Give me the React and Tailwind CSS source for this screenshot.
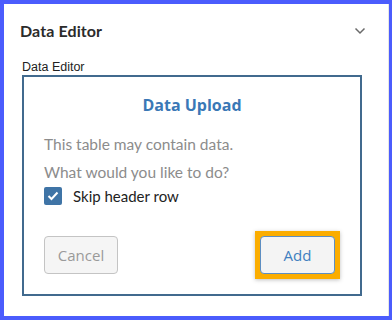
import React, { useState } from "react";

// Data editor panel with the upload dialog
export default function App() {
  const [skipHeader, setSkipHeader] = useState(true);

  return (
    <div className="w-[392px] h-[320px] bg-white border-[#4b5cfd] border-t-[4px] border-l-[4px] border-b-[4px] border-r-[3px] font-['Open_Sans',sans-serif]">
      <div className="h-full border-r border-[#e6e6e6] flex flex-col">
        <div className="flex items-center justify-between pl-4 pr-[22px] pt-[15px] h-[38px]">
          <div className="text-[16px] font-bold text-[#2b2b2b] font-['Lato',sans-serif] tracking-[0.1px]">
            Data Editor
          </div>
          <svg width="12" height="8" viewBox="0 0 12 8" fill="none">
            <path d="M1.5 1.5 L6 6 L10.5 1.5" stroke="#6a6a6a" strokeWidth="1.5" />
          </svg>
        </div>

        <div className="pl-[18px] mt-[17px] text-[12.5px] leading-[16px] text-[#222] font-['Liberation_Sans',sans-serif]">
          Data Editor
        </div>

        <div className="ml-[18px] w-[340px] h-[221px] border-2 border-[#416a8e] flex flex-col px-5">
          <div className="text-center text-[16px] font-bold text-[#3a78b6] mt-[17px] leading-[22px]">
            Data Upload
          </div>
          <div className="font-['Lato',sans-serif]">
            <div className="mt-[18px] text-[15.5px] leading-[20px] text-[#8c8c8c]">
              This table may contain data.
            </div>
            <div className="mt-[8px] text-[15.5px] leading-[20px] text-[#8c8c8c]">
              What would you like to do?
            </div>
            <label className="flex items-center gap-[11px] mt-[4px] cursor-pointer">
              <span
                onClick={() => setSkipHeader(!skipHeader)}
                className="w-[18px] h-[18px] rounded-[2px] bg-[#3f74a6] flex items-center justify-center"
              >
                {skipHeader && (
                  <svg width="12" height="10" viewBox="0 0 12 10" fill="none">
                    <path d="M1.5 5 L4.5 8 L10.5 1.5" stroke="white" strokeWidth="2" />
                  </svg>
                )}
              </span>
              <span className="text-[15px] leading-[20px] text-[#222]">Skip header row</span>
            </label>
          </div>

          <div className="flex items-center justify-between mt-[25px]">
            <button className="w-[74px] h-[38px] rounded-[4px] border border-[#c4c4c4] bg-[#f5f5f5] text-[15px] text-[#9a9a9a]">
              Cancel
            </button>
            <div className="p-[5px] bg-[#fbad00] shadow-[0_1px_4px_rgba(0,0,0,0.25)]">
              <button className="w-[75px] h-[38px] rounded-[4px] border border-[#5d8ec2] bg-[#f4f4f4] text-[15px] text-[#3f7fc0]">
                Add
              </button>
            </div>
          </div>
        </div>
      </div>
    </div>
  );
}
